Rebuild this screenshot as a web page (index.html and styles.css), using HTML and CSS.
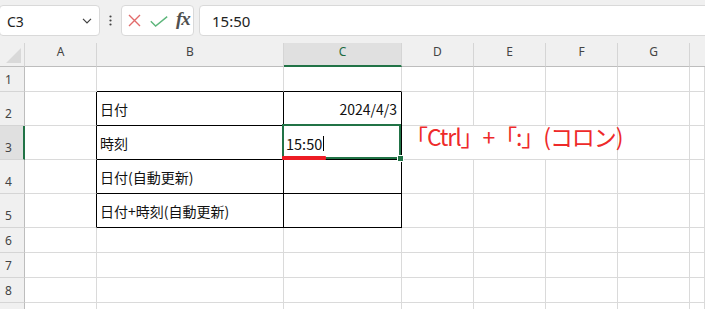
FILE: index.html
```html
<!DOCTYPE html>
<html lang="ja">
<head>
<meta charset="utf-8">
<link rel="stylesheet" href="styles.css">
</head>
<body>
<div class="app">
  <div class="toolbar">
    <div class="namebox">
      <span class="nb-text">C3</span>
      <svg class="chev" width="10" height="6" viewBox="0 0 10 6"><path d="M1 0.8 L5 4.8 L9 0.8" fill="none" stroke="#404040" stroke-width="1.2"/></svg>
    </div>
    <div class="dots">
      <svg width="3" height="12" viewBox="0 0 3 12"><circle cx="1.5" cy="1.5" r="1.1" fill="#444"/><circle cx="1.5" cy="5.5" r="1.1" fill="#444"/><circle cx="1.5" cy="9.5" r="1.1" fill="#444"/></svg>
    </div>
    <div class="fxbox">
      <svg class="ic-x" width="13" height="13" viewBox="0 0 13 13"><path d="M1 1 L12 12 M12 1 L1 12" stroke="#e26b6b" stroke-width="1.4" fill="none"/></svg>
      <svg class="ic-ok" width="18" height="11" viewBox="0 0 18 11"><path d="M0.8 5.2 L5.6 10 L17.2 0.6" stroke="#5db67b" stroke-width="1.4" fill="none"/></svg>
      <span class="fx">fx</span>
    </div>
    <div class="formula">15:50</div>
  </div>

  <div class="sheet">
    <!-- header row -->
    <div class="corner"><svg width="24" height="23" viewBox="0 0 24 23"><path d="M6 20 L21 20 L21 5 Z" fill="#d9d9d9"/></svg></div>
    <div class="ch">A</div>
    <div class="ch">B</div>
    <div class="ch ch-sel">C</div>
    <div class="ch">D</div>
    <div class="ch">E</div>
    <div class="ch">F</div>
    <div class="ch">G</div>
    <div class="ch ch-last"></div>

    <!-- row 1 -->
    <div class="rh">1</div>
    <div class="c"></div>
    <div class="c bb"></div>
    <div class="c bb"></div>
    <div class="c"></div><div class="c"></div><div class="c"></div><div class="c"></div><div class="c"></div>

    <!-- row 2 -->
    <div class="rh">2</div>
    <div class="c br"></div>
    <div class="c br bb">日付</div>
    <div class="c br bb right">2024/4/3</div>
    <div class="c"></div><div class="c"></div><div class="c"></div><div class="c"></div><div class="c"></div>

    <!-- row 3 -->
    <div class="rh rh-sel">3</div>
    <div class="c br"></div>
    <div class="c br bb">時刻</div>
    <div class="c br bb active">15:50<span class="caret"></span>
      <span class="sel"></span>
      <span class="handle"></span>
      <span class="uline"></span>
    </div>
    <div class="c note">「Ctrl」+「:」(コロン)</div>
    <div class="c"></div><div class="c"></div>

    <!-- row 4 -->
    <div class="rh">4</div>
    <div class="c br"></div>
    <div class="c br bb">日付(自動更新)</div>
    <div class="c br bb"></div>
    <div class="c"></div><div class="c"></div><div class="c"></div><div class="c"></div><div class="c"></div>

    <!-- row 5 -->
    <div class="rh">5</div>
    <div class="c br"></div>
    <div class="c br bb">日付+時刻(自動更新)</div>
    <div class="c br bb"></div>
    <div class="c"></div><div class="c"></div><div class="c"></div><div class="c"></div><div class="c"></div>

    <!-- row 6 -->
    <div class="rh">6</div>
    <div class="c"></div><div class="c"></div><div class="c"></div><div class="c"></div><div class="c"></div><div class="c"></div><div class="c"></div><div class="c"></div>
    <!-- row 7 -->
    <div class="rh">7</div>
    <div class="c"></div><div class="c"></div><div class="c"></div><div class="c"></div><div class="c"></div><div class="c"></div><div class="c"></div><div class="c"></div>
    <!-- row 8 -->
    <div class="rh">8</div>
    <div class="c"></div><div class="c"></div><div class="c"></div><div class="c"></div><div class="c"></div><div class="c"></div><div class="c"></div><div class="c"></div>
    <!-- row 9 (only its top edge is visible) -->
    <div class="rh"></div>
    <div class="c"></div><div class="c"></div><div class="c"></div><div class="c"></div><div class="c"></div><div class="c"></div><div class="c"></div><div class="c"></div>
  </div>
</div>
</body>
</html>
```

FILE: styles.css
```css
* { box-sizing: border-box; }

html, body {
  margin: 0;
  padding: 0;
}

body {
  width: 705px;
  height: 309px;
  overflow: hidden;
  background: #f0f0f0;
  font-family: "Noto Sans", "Noto Sans CJK JP", sans-serif;
  color: #222;
}

.app {
  width: 705px;
  height: 309px;
  overflow: hidden;
}

/* ---------- toolbar ---------- */
.toolbar {
  height: 43px;
  padding-top: 5px;
  display: flex;
  align-items: flex-start;
}

.namebox,
.fxbox,
.formula {
  height: 31px;
  background: #fff;
  border: 1px solid #d9d9d9;
  border-radius: 4px;
}

.namebox {
  width: 101px;
  margin-left: -1px;
  display: flex;
  align-items: center;
  justify-content: space-between;
  padding: 0 7px 0 7px;
}

.nb-text {
  font-size: 14px;
  color: #222;
  margin-top: 1px;
}

.chev { margin-top: 1px; }

.dots {
  width: 21px;
  height: 31px;
  display: flex;
  align-items: center;
  justify-content: center;
}

.dots svg { margin-top: 1px; }

.fxbox {
  width: 73px;
  display: flex;
  align-items: center;
  padding-left: 6px;
}

.ic-ok { margin-left: 9px; margin-top: 1px; }

.fx {
  font-family: "Liberation Serif", "DejaVu Serif", serif;
  font-style: italic;
  font-weight: bold;
  font-size: 19px;
  color: #505050;
  margin-left: 8px;
  margin-top: -3px;
  letter-spacing: -1px;
}

.formula {
  flex: 1;
  margin-left: 5px;
  margin-right: -10px;
  display: flex;
  align-items: center;
  padding-left: 12px;
  font-size: 15px;
  color: #222;
}

/* ---------- sheet ---------- */
.sheet {
  display: grid;
  grid-template-columns: 25px 72px 187px 118px 72px 72px 72px 72px 1fr;
  grid-template-rows: 24px 25px 34px 34px 34px 34px 25px 25px 25px 25px;
  background: #fff;
}

.corner {
  background: #f0f0f0;
  border-right: 1px solid #d5d5d5;
  border-bottom: 1px solid #bdbdbd;
  display: flex;
  align-items: flex-start;
}

.ch {
  background: #f0f0f0;
  border-right: 1px solid #d5d5d5;
  border-bottom: 1px solid #bdbdbd;
  display: flex;
  align-items: center;
  justify-content: center;
  padding-bottom: 6px;
  font-size: 12px;
  color: #444;
}

.ch-sel {
  background: #e0e0e0;
  border-bottom: 2px solid #217346;
  color: #1d6b40;
  padding-bottom: 5px;
}

.rh {
  background: #f0f0f0;
  border-right: 1px solid #bdbdbd;
  border-bottom: 1px solid #d5d5d5;
  display: flex;
  align-items: flex-end;
  padding-left: 5px;
  padding-bottom: 4px;
  font-size: 12px;
  line-height: 14px;
  color: #444;
}

.rh-sel {
  background: #e0e0e0;
  border-right: 2px solid #217346;
}

.c {
  border-right: 1px solid #dadada;
  border-bottom: 1px solid #dadada;
  display: flex;
  align-items: flex-end;
  padding: 0 4px 6px 3px;
  font-family: "Noto Sans CJK JP", "Noto Sans", sans-serif;
  font-size: 14px;
  line-height: 20px;
  color: #111;
  white-space: nowrap;
}

.c.br { border-right-color: #000; }
.c.bb { border-bottom-color: #000; }
.c.right { justify-content: flex-end; }

.active {
  position: relative;
  padding-left: 2px;
  padding-bottom: 5px;
  font-size: 14.5px;
}

.caret {
  display: inline-block;
  width: 1px;
  height: 15px;
  background: #000;
  margin-left: 1px;
  margin-bottom: 3px;
}

.sel {
  position: absolute;
  top: -2px;
  left: -2px;
  right: 0;
  bottom: 0;
  border: 2px solid #217346;
}

.handle {
  position: absolute;
  right: -3px;
  bottom: -3px;
  width: 7px;
  height: 7px;
  background: #217346;
  border: 1px solid #fff;
}

.uline {
  position: absolute;
  left: -2px;
  bottom: -1px;
  width: 44px;
  height: 4px;
  background: #ed1c24;
  border-radius: 1px;
}

.note {
  grid-column: span 3;
  color: #ee2a2a;
  font-size: 23px;
  line-height: 30px;
  padding-bottom: 8px;
  letter-spacing: -1.1px;
  overflow: visible;
}

.ch-last { border-right: none; }
```
